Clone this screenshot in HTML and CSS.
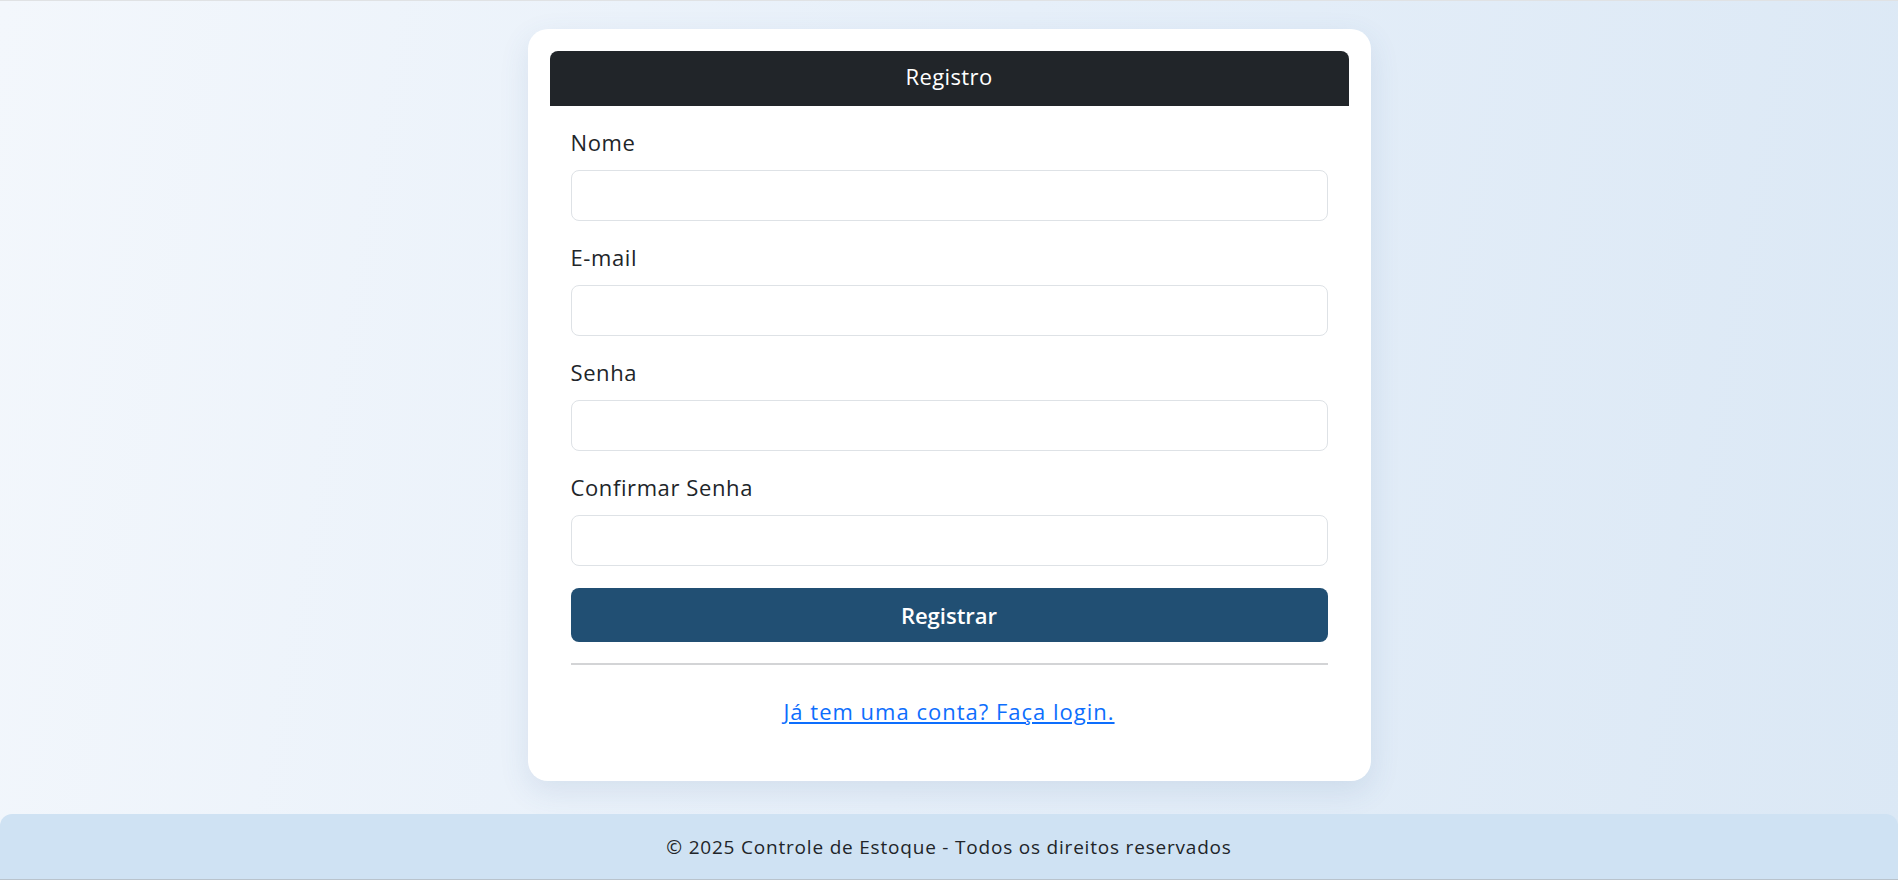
FILE: index.html
```html
<!DOCTYPE html>
<html lang="pt-BR">
<head>
<meta charset="utf-8">
<title>Registro - Controle de Estoque</title>
<link rel="stylesheet" href="styles.css">
</head>
<body>
<div class="page">
  <main class="main">
    <section class="card">
      <div class="card-header">Registro</div>
      <form class="card-body">
        <div class="field">
          <label class="label" for="nome">Nome</label>
          <input class="input" id="nome" type="text">
        </div>
        <div class="field">
          <label class="label" for="email">E-mail</label>
          <input class="input" id="email" type="email">
        </div>
        <div class="field">
          <label class="label" for="senha">Senha</label>
          <input class="input" id="senha" type="password">
        </div>
        <div class="field">
          <label class="label" for="confirmar">Confirmar Senha</label>
          <input class="input" id="confirmar" type="password">
        </div>
        <button class="btn" type="button">Registrar</button>
        <hr class="divider">
        <p class="login-line"><a class="login-link" href="#">Já tem uma conta? Faça login.</a></p>
      </form>
    </section>
  </main>
  <footer class="footer">© 2025 Controle de Estoque - Todos os direitos reservados</footer>
</div>
</body>
</html>
```

FILE: styles.css
```css
* { box-sizing: border-box; }
html, body { margin: 0; padding: 0; }
body {
  font-family: "Open Sans", "Noto Sans", sans-serif;
  color: #212529;
  background: linear-gradient(100deg, #f3f7fc 0%, #e6eff9 50%, #dbe8f5 100%);
  border-top: 1px solid #e0e2e4;
}
.page {
  min-height: 879px;
  display: flex;
  flex-direction: column;
}
.main {
  flex: 1;
  padding-top: 28px;
  padding-bottom: 32px;
}
.card {
  width: 843px;
  margin: 0 auto;
  background: #fff;
  border-radius: 20px;
  padding: 22px 22px 55px;
  box-shadow: 0 10px 30px rgba(60, 100, 150, 0.12);
}
.card-header {
  background: #212529;
  color: #fff;
  height: 55px;
  padding-bottom: 6px;
  border-radius: 8px 8px 0 0;
  display: flex;
  align-items: center;
  justify-content: center;
  font-size: 22px;
  letter-spacing: 0.4px;
}
.card-body {
  padding: 21px 21px 0;
  display: flex;
  flex-direction: column;
}
.field {
  display: flex;
  flex-direction: column;
  margin-bottom: 21px;
}
.label {
  font-size: 22px;
  line-height: 30px;
  letter-spacing: 0.6px;
  margin-bottom: 13px;
}
.input {
  height: 51px;
  border: 1px solid #dee2e6;
  border-radius: 8px;
  background: #fff;
  font: inherit;
  padding: 0 16px;
}
.btn {
  height: 54px;
  margin-top: 1px;
  border: none;
  border-radius: 8px;
  background: #214f73;
  color: #fff;
  font-family: inherit;
  font-size: 22px;
  font-weight: 600;
}
.divider {
  margin: 21px 0 0;
  border: none;
  border-top: 2px solid #d3d4d6;
}
.login-line {
  margin: 31px 0 0;
  text-align: center;
  font-size: 22px;
  line-height: 30px;
  letter-spacing: 1px;
}
.login-link {
  color: #0d6efd;
  text-decoration: underline;
}
.footer {
  height: 66px;
  background: #cfe2f3;
  border-radius: 12px 12px 0 0;
  display: flex;
  align-items: center;
  justify-content: center;
  font-size: 19px;
  letter-spacing: 0.8px;
  border-bottom: 1px solid #b9c3cc;
}
```
